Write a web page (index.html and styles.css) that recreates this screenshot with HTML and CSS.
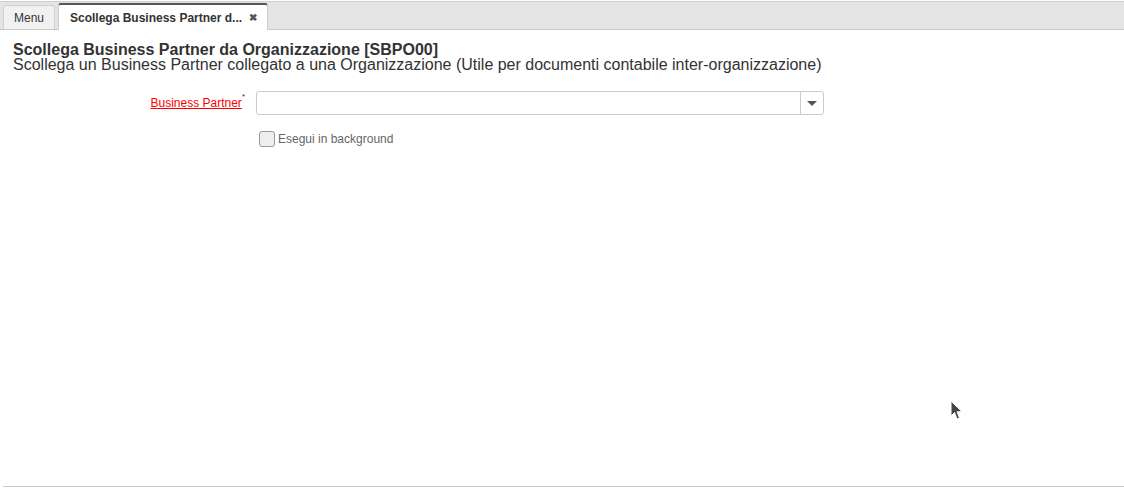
FILE: index.html
```html
<!DOCTYPE html>
<html>
<head>
<meta charset="utf-8">
<link rel="stylesheet" href="styles.css">
</head>
<body>
<div class="tabbar">
  <div class="tab tab-menu">Menu</div>
  <div class="tab tab-active"><span class="tab-title">Scollega Business Partner d...</span><span class="tab-close">&#x2716;</span></div>
</div>
<div class="content">
  <div class="header">
    <div class="title">Scollega Business Partner da Organizzazione [SBPO00]</div>
    <div class="subtitle">Scollega un Business Partner collegato a una Organizzazione (Utile per documenti contabile inter-organizzazione)</div>
  </div>
  <div class="form">
    <div class="row">
      <div class="label"><a class="req">Business Partner</a><sup class="star">*</sup></div>
      <div class="combo">
        <div class="combo-input"></div>
        <div class="combo-btn"><span class="caret"></span></div>
      </div>
    </div>
    <div class="row row-check">
      <div class="label"></div>
      <label class="check"><span class="box"></span><span class="check-text">Esegui in background</span></label>
    </div>
  </div>
</div>
<div class="footer-line"></div>
<svg class="cursor" width="14" height="22" viewBox="0 0 14 22"><path d="M1 1 L1 16 L4.5 12.5 L7 19 L9.5 18 L7 11.8 L12 11.8 Z" fill="#444" stroke="#fff" stroke-width="1"/></svg>
</body>
</html>
```
FILE: styles.css
```css
html, body {
  margin: 0;
  padding: 0;
  background: #fff;
  font-family: "Liberation Sans", Arial, sans-serif;
  color: #333;
}
body {
  width: 1124px;
  height: 488px;
  position: relative;
  overflow: hidden;
}
.tabbar {
  height: 27px;
  background: #e4e4e4;
  border-top: 1px solid #cfcfcf;
  border-bottom: 1px solid #c8c8c8;
  display: flex;
  align-items: flex-end;
  padding-left: 3px;
  gap: 3px;
  margin-top: 1px;
  box-sizing: content-box;
}
.tab {
  font-size: 12px;
  box-sizing: border-box;
  display: flex;
  align-items: center;
  border-radius: 3px 3px 0 0;
}
.tab-menu {
  height: 24px;
  width: 52px;
  background: #f1f1f1;
  border: 1px solid #cfcfcf;
  border-bottom: none;
  padding-left: 10px;
  color: #333;
}
.tab-active {
  width: 210px;
  background: #fff;
  border: 1px solid #cfcfcf;
  border-top: 2px solid #555;
  border-bottom: none;
  padding-left: 11px;
  margin-bottom: -1px;
  height: 27px;
  font-weight: bold;
  color: #333;
}
.tab-title {
  flex: none;
}
.tab-close {
  margin-left: 7px;
  font-size: 10px;
  color: #555;
}
.content {
  padding: 12px 13px 0 13px;
}
.header {
  line-height: 15px;
  font-size: 16px;
}
.title {
  font-weight: bold;
}
.subtitle {
  color: #333;
}
.form {
  margin-top: 19px;
}
.row {
  display: flex;
  align-items: center;
}
.label {
  width: 232px;
  text-align: right;
  font-size: 12px;
  padding-right: 11px;
  flex: none;
  box-sizing: content-box;
}
.req {
  color: #f00;
  text-decoration: underline;
}
.star {
  font-size: 8px;
  color: #333;
  vertical-align: top;
  position: relative;
  top: -4px;
}
.combo {
  width: 568px;
  height: 24px;
  border: 1px solid #ccc;
  border-radius: 3px;
  box-sizing: border-box;
  display: flex;
}
.combo-input {
  flex: 1;
}
.combo-btn {
  width: 22px;
  border-left: 1px solid #ccc;
  display: flex;
  align-items: center;
  justify-content: center;
}
.caret {
  width: 0;
  height: 0;
  border-left: 5px solid transparent;
  border-right: 5px solid transparent;
  border-top: 5px solid #555;
}
.row-check {
  margin-top: 16px;
}
.check {
  display: flex;
  align-items: center;
  margin-left: 3px;
}
.box {
  width: 16px;
  height: 16px;
  box-sizing: border-box;
  border: 1px solid #999;
  border-radius: 3px;
  background: #eee;
  margin-right: 3px;
}
.check-text {
  font-size: 12px;
  color: #666;
}
.footer-line {
  position: absolute;
  left: 3px;
  right: 0;
  top: 486px;
  border-top: 1px solid #c8c8c8;
}
.cursor {
  position: absolute;
  left: 950px;
  top: 400px;
}
```
